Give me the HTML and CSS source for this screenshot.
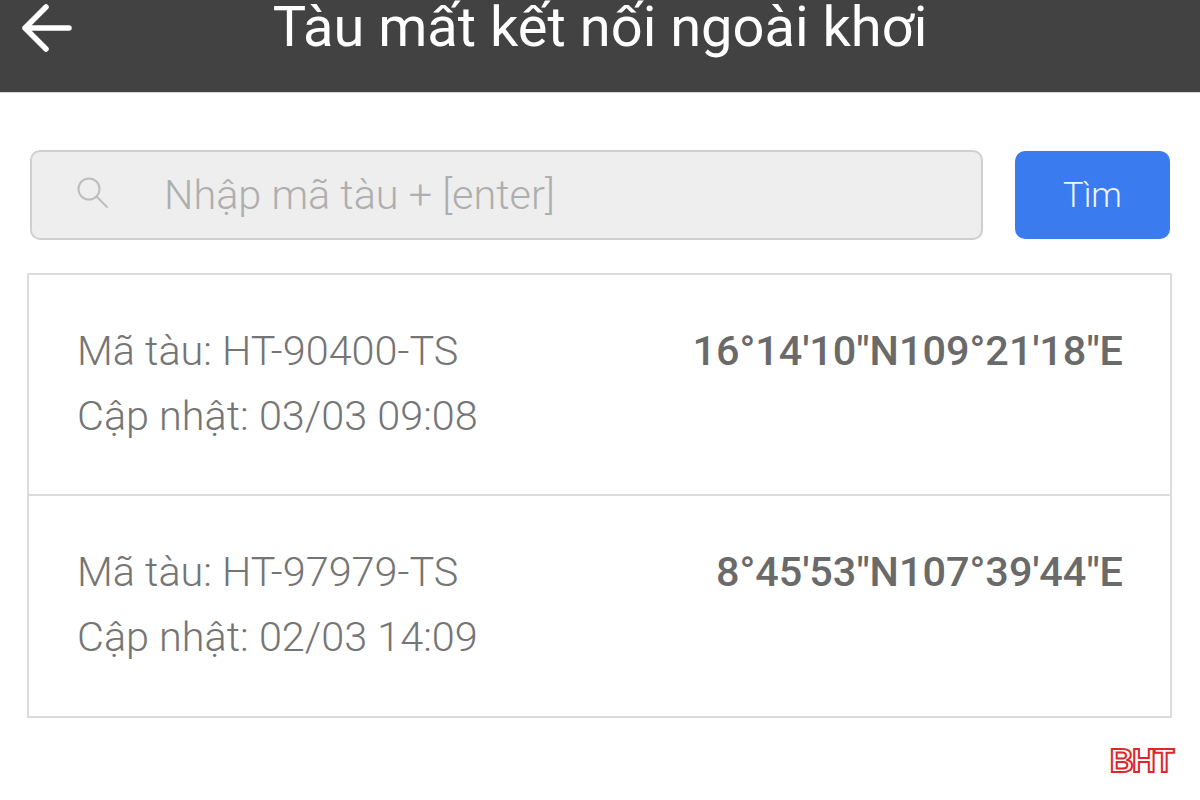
FILE: index.html
```html
<!DOCTYPE html>
<html lang="vi">

<head>
  <meta charset="UTF-8">
  <meta name="viewport" content="width=device-width, initial-scale=1.0">
  <title>Tàu mất kết nối ngoài khơi</title>
  <link rel="stylesheet" href="styles.css">
</head>

<body>
  <!-- Thanh tiêu đề -->
  <header class="app-bar">
    <a class="back-link" href="#" aria-label="Quay lại">
      <svg width="52" height="52" viewBox="0 0 52 52" fill="none" stroke="#fff" stroke-width="5.5" stroke-linecap="round" stroke-linejoin="round">
        <path d="M48 26H4M25 5 4 26l21 21"/>
      </svg>
    </a>
    <h1 class="app-title">Tàu mất kết nối ngoài khơi</h1>
  </header>

  <!-- Ô tìm kiếm -->
  <form class="search-row">
    <label class="search-box">
      <svg class="search-icon" width="34" height="34" viewBox="0 0 34 34" fill="none" stroke="#bdbdbd" stroke-width="2" stroke-linecap="round">
        <circle cx="14" cy="14" r="10.5"/>
        <path d="M22 22 32 32"/>
      </svg>
      <input class="search-input" type="text" placeholder="Nhập mã tàu + [enter]">
    </label>
    <button class="btn-search" type="button">Tìm</button>
  </form>

  <!-- Danh sách tàu -->
  <div class="ship-list">
    <div class="ship-row">
      <div class="ship-info">
        <div>Mã tàu: HT-90400-TS</div>
        <div>Cập nhật: 03/03 09:08</div>
      </div>
      <div class="ship-coords">16°14'10"N109°21'18"E</div>
    </div>
    <div class="ship-row">
      <div class="ship-info">
        <div>Mã tàu: HT-97979-TS</div>
        <div>Cập nhật: 02/03 14:09</div>
      </div>
      <div class="ship-coords">8°45'53"N107°39'44"E</div>
    </div>
  </div>

  <div class="brand">BHT</div>
</body>

</html>
```

FILE: styles.css
```css
:root {
  --bar: #424242;
  --line: #dcdcdc;
  --text: #757575;
  --blue: #3a7bef;
}

html,
body {
  height: 100%;
}

body {
  margin: 0;
  height: 800px;
  overflow: hidden;
  background: #fff;
  font-family: Roboto, "Noto Sans", sans-serif;
  color: var(--text);
}

.app-bar {
  position: relative;
  height: 92px;
  background: var(--bar);
  border-bottom: 1px solid #d8d8d8;
  text-align: center;
}

.back-link {
  position: absolute;
  left: 21px;
  top: 2px;
}

.app-title {
  margin: 0;
  font-size: 56px;
  font-weight: 400;
  line-height: 54px;
  color: #fff;
}

.search-row {
  display: flex;
  align-items: center;
  gap: 32px;
  margin: 57px 30px 0;
}

.search-box {
  display: flex;
  align-items: center;
  width: 953px;
  height: 90px;
  box-sizing: border-box;
  padding-left: 43px;
  background: #eeeeee;
  border: 2px solid #cfcfcf;
  border-radius: 10px;
}

.search-icon {
  flex: none;
  margin-top: -6px;
}

.search-input {
  flex: 1;
  min-width: 0;
  margin-left: 55px;
  padding: 0;
  border: none;
  outline: none;
  background: transparent;
  font-family: inherit;
  font-size: 41.4px;
  font-weight: 300;
  color: var(--text);
}

.search-input::placeholder {
  color: #aeaeae;
  opacity: 1;
}

.btn-search {
  width: 155px;
  height: 88px;
  padding: 0;
  border: none;
  border-radius: 10px;
  background: var(--blue);
  color: #eef4ff;
  font-family: inherit;
  font-size: 34.5px;
  font-weight: 300;
}

.ship-list {
  margin: 33px 28px 0 27px;
  border: 2px solid var(--line);
}

.ship-row {
  display: flex;
  justify-content: space-between;
  height: 219px;
  box-sizing: border-box;
  padding: 44px 47px 0 48px;
}

.ship-row + .ship-row {
  border-top: 2px solid var(--line);
  height: 222px;
  padding-top: 44px;
}

.ship-info {
  font-size: 41.4px;
  font-weight: 300;
  line-height: 65px;
}

.ship-coords {
  font-size: 41.4px;
  font-weight: 500;
  line-height: 65px;
  color: #6a6a6a;
}

.brand {
  position: absolute;
  right: 27px;
  top: 741px;
  font-family: "Liberation Sans", sans-serif;
  font-size: 33px;
  font-weight: 700;
  line-height: 40px;
  letter-spacing: -1.5px;
  color: #fff;
  -webkit-text-stroke: 2px #e0262a;
}
```
